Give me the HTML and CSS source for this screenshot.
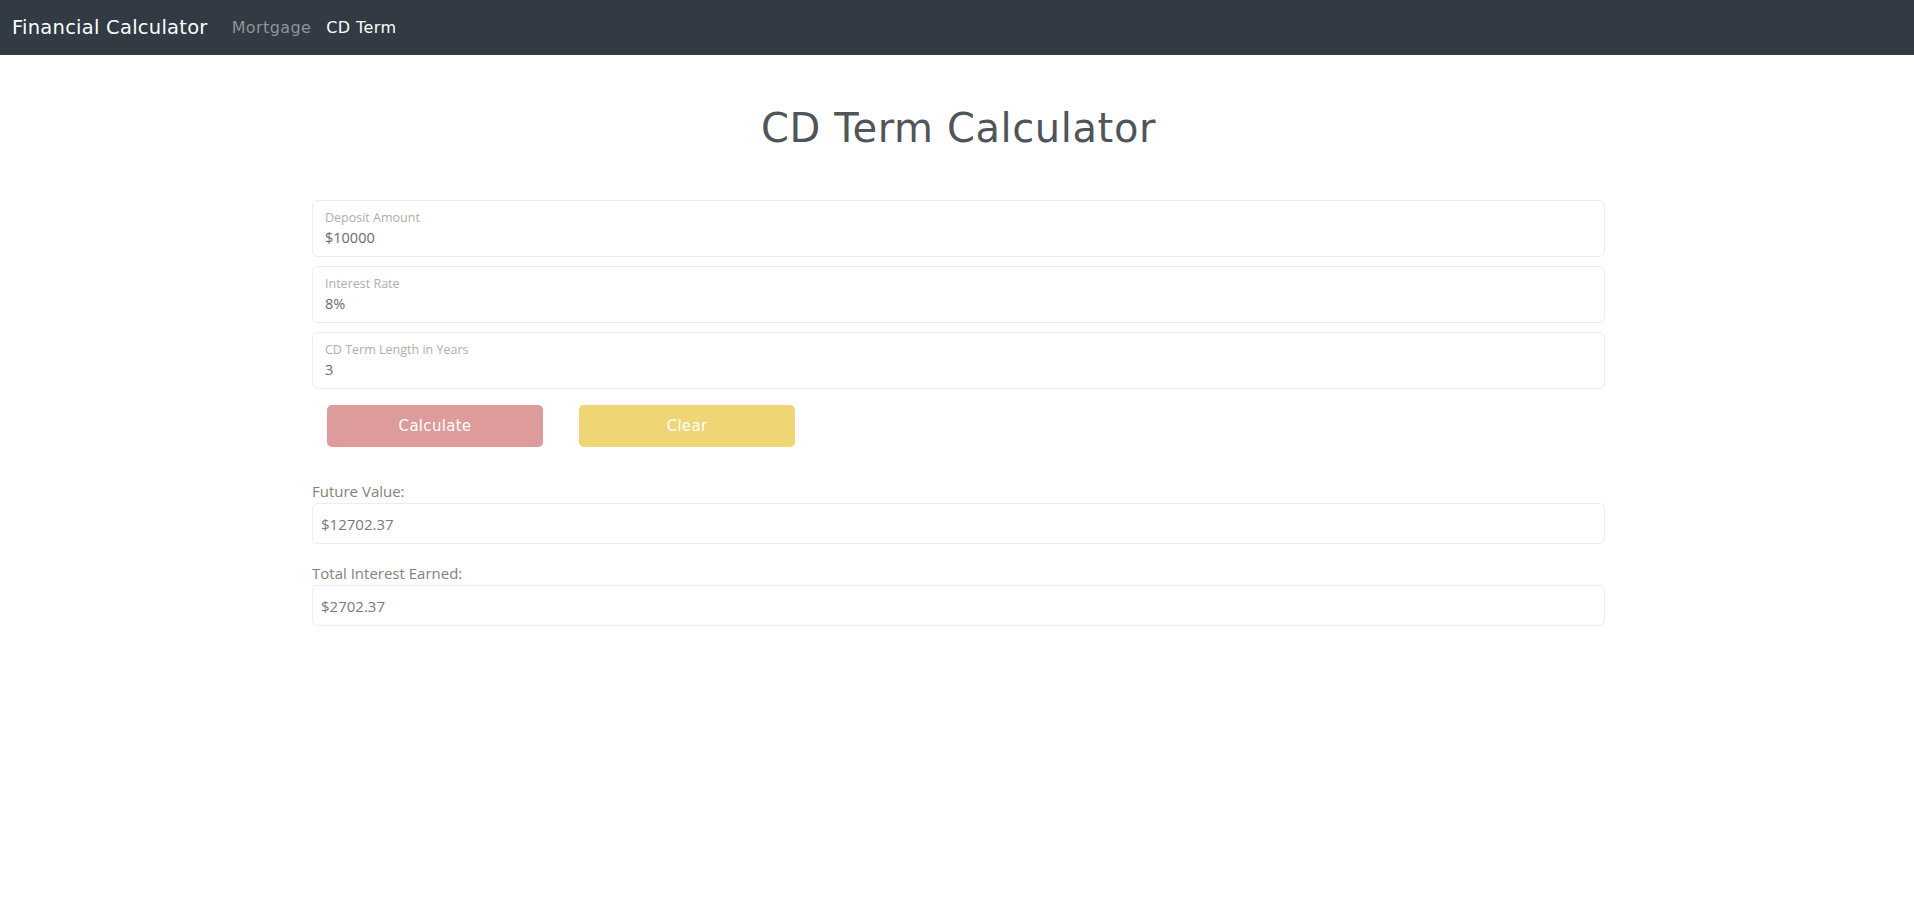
FILE: index.html
```html
<!DOCTYPE html>
<html lang="en">
<head>
<meta charset="utf-8">
<title>CD Term Calculator</title>
<link rel="stylesheet" href="styles.css">
</head>
<body>
<nav class="navbar">
  <a class="brand" href="#">Financial Calculator</a>
  <a class="nav-link" href="#">Mortgage</a>
  <a class="nav-link active" href="#">CD Term</a>
</nav>
<main class="container">
  <h1 class="title">CD Term Calculator</h1>
  <form class="form">
    <div class="field">
      <label class="field-label">Deposit Amount</label>
      <div class="field-value">$10000</div>
    </div>
    <div class="field">
      <label class="field-label">Interest Rate</label>
      <div class="field-value">8%</div>
    </div>
    <div class="field">
      <label class="field-label">CD Term Length in Years</label>
      <div class="field-value">3</div>
    </div>
    <div class="buttons">
      <button type="button" class="btn btn-calc">Calculate</button>
      <button type="button" class="btn btn-clear">Clear</button>
    </div>
  </form>
  <section class="results">
    <div class="result">
      <div class="result-label">Future Value:</div>
      <div class="result-box">$12702.37</div>
    </div>
    <div class="result">
      <div class="result-label">Total Interest Earned:</div>
      <div class="result-box">$2702.37</div>
    </div>
  </section>
</main>
</body>
</html>
```
FILE: styles.css
```css
* { box-sizing: border-box; }
body {
  margin: 0;
  background: #fff;
  font-family: "Open Sans", "Noto Sans", sans-serif;
}
.navbar {
  height: 55px;
  background: #323a44;
  display: flex;
  align-items: center;
  padding: 0 12px;
}
.brand {
  font-family: "DejaVu Sans", sans-serif;
  font-size: 19.5px;
  color: #fff;
  text-decoration: none;
  margin-right: 24px;
  letter-spacing: 0.25px;
}
.nav-link {
  font-family: "DejaVu Sans", sans-serif;
  font-size: 16px;
  color: #8f9398;
  text-decoration: none;
  margin-right: 15px;
  letter-spacing: 0.4px;
}
.nav-link.active { color: #fff; }
.container {
  width: 1296px;
  margin: 0 auto;
  padding-left: 3px;
}
.title {
  font-family: "DejaVu Sans", sans-serif;
  font-weight: 400;
  font-size: 40px;
  color: #50555a;
  text-align: center;
  margin: 50px 0 49px;
  letter-spacing: 0.6px;
}
.form {
  display: flex;
  flex-direction: column;
  gap: 9px;
}
.field {
  height: 57px;
  border: 1px solid #ebedef;
  border-radius: 6px;
  padding: 8px 12px 0;
}
.field-label {
  display: block;
  font-size: 12.5px;
  color: #b5aca6;
  line-height: 18px;
}
.field-value {
  font-size: 14.5px;
  color: #6c6c6c;
  line-height: 22px;
}
.buttons {
  display: flex;
  gap: 36px;
  padding: 7px 15px 0;
}
.btn {
  width: 216px;
  height: 42px;
  border: none;
  border-radius: 5px;
  color: #fff;
  font-family: "DejaVu Sans", sans-serif;
  font-size: 15px;
  letter-spacing: 0.3px;
}
.btn-calc { background: #de9b9c; }
.btn-clear { background: #efd574; }
.results {
  margin-top: 33px;
  display: flex;
  flex-direction: column;
  gap: 18px;
}
.result-label {
  font-size: 15px;
  color: #8a807b;
  line-height: 22px;
  margin-bottom: 1px;
}
.result-box {
  height: 41px;
  border: 1px solid #ebedef;
  border-radius: 6px;
  padding: 0 8px;
  display: flex;
  align-items: center;
  font-size: 15px;
  color: #7a7a7a;
}
```
